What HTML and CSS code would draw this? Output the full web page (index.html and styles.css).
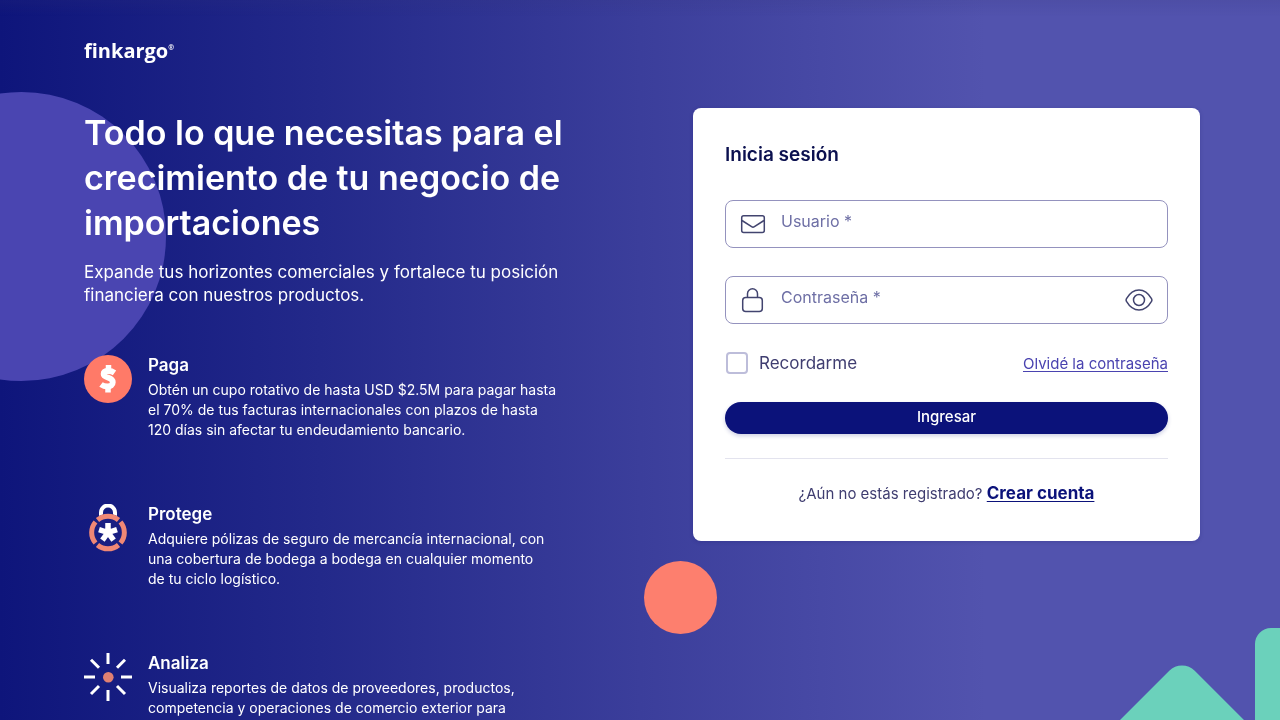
FILE: index.html
```html
<!DOCTYPE html>
<html lang="es">
<head>
<meta charset="utf-8">
<meta name="viewport" content="width=device-width, initial-scale=1">
<title>Finkargo</title>
<link rel="stylesheet" href="styles.css">
</head>
<body>
<div class="shapes" aria-hidden="true">
  <span class="shape shape-circle"></span>
  <span class="shape shape-dot"></span>
  <span class="shape shape-diamond"></span>
  <span class="shape shape-block"></span>
</div>
<div class="page">
  <header class="header">
    <a class="logo" href="#">finkargo<span class="logo-mark">®</span></a>
  </header>
  <main class="main">
    <section class="intro">
      <h1 class="title">Todo lo que necesitas para el<br>crecimiento de tu negocio de<br>importaciones</h1>
      <p class="lead">Expande tus horizontes comerciales y fortalece tu posición<br>financiera con nuestros productos.</p>
      <ul class="features">
        <li class="feature">
          <svg class="feature-icon" viewBox="0 0 48 48" aria-hidden="true">
            <circle cx="24" cy="24" r="24" fill="#ff7a68"/>
            <path d="M30.5 17.8C28.8 16.6 26.7 16 24.4 16c-3 0-4.8 1.1-4.800 3 0 4.500 9.200 2.600 9.200 8.200 0 2.900-2.200 4.300-5.300 4.300-2.400 0-4.700-.7-6.500-2" fill="none" stroke="#fff" stroke-width="5.800"/>
            <path d="M24.500 10v6M24 31.500v6" stroke="#fff" stroke-width="5.500"/>
          </svg>
          <div class="feature-body">
            <h2 class="feature-title">Paga</h2>
            <p class="feature-text">Obtén un cupo rotativo de hasta USD $2.5M para pagar hasta<br>el 70% de tus facturas internacionales con plazos de hasta<br>120 días sin afectar tu endeudamiento bancario.</p>
          </div>
        </li>
        <li class="feature">
          <svg class="feature-icon" viewBox="0 0 48 48" aria-hidden="true">
            <path d="M17 12V8.500a7 7 0 0 1 14 0V12" fill="none" stroke="#fff" stroke-width="4"/>
            <circle cx="24" cy="28.500" r="18.800" fill="#191f82"/>
            <g fill="none" stroke="#f08875" stroke-width="5">
              <path d="M13.500 16a16.300 16.300 0 0 1 21 0"/>
              <path d="M36.500 18a16.300 16.300 0 0 1 0 21"/>
              <path d="M34.500 41a16.300 16.300 0 0 1-21 0"/>
              <path d="M11.500 39a16.300 16.300 0 0 1 0-21"/>
            </g>
            <path d="M24 28.500V19M24 28.500l9-2.900M24 28.500l5.600 7.700M24 28.500l-5.600 7.700M24 28.500l-9-2.900" stroke="#fff" stroke-width="5.500"/>
          </svg>
          <div class="feature-body">
            <h2 class="feature-title">Protege</h2>
            <p class="feature-text">Adquiere pólizas de seguro de mercancía internacional, con<br>una cobertura de bodega a bodega en cualquier momento<br>de tu ciclo logístico.</p>
          </div>
        </li>
        <li class="feature">
          <svg class="feature-icon" viewBox="0 0 48 48" aria-hidden="true">
            <circle cx="24.300" cy="24.300" r="5.300" fill="#e08072"/>
            <path d="M24 0v11M24 37v11M0 24h11M37 24h11M7 6.700l8 8M33 33l8 8M41 6.700l-8 8M15 33l-8 8" stroke="#fff" stroke-width="3"/>
          </svg>
          <div class="feature-body">
            <h2 class="feature-title">Analiza</h2>
            <p class="feature-text">Visualiza reportes de datos de proveedores, productos,<br>competencia y operaciones de comercio exterior para</p>
          </div>
        </li>
      </ul>
    </section>
    <form class="card">
      <h2 class="card-title">Inicia sesión</h2>
      <div class="field">
        <svg class="field-icon" viewBox="0 0 28 28" aria-hidden="true">
          <rect x="2.700" y="5.700" width="22.600" height="16.800" rx="2"/>
          <path d="M3 10.500l9.600 6.200c.9.600 1.900.6 2.800 0l9.600-6.200"/>
        </svg>
        <input class="input" type="text" placeholder="Usuario *" aria-label="Usuario" required>
      </div>
      <div class="field">
        <svg class="field-icon" viewBox="0 0 28 28" aria-hidden="true">
          <rect x="3.700" y="11.500" width="19.600" height="14" rx="3"/>
          <path d="M8.500 11.500V7.800a5 5 0 0 1 10 0v3.700"/>
        </svg>
        <input class="input" type="password" placeholder="Contraseña *" aria-label="Contraseña" required>
        <button class="reveal" type="button" aria-label="Mostrar contraseña">
          <svg class="field-icon" viewBox="0 0 28 28" aria-hidden="true">
            <path d="M1.500 12.600C4.600 7.300 9 4 14 4s9.400 3.300 12.500 8.600c.5.900.5 1.900 0 2.800C23.400 20.700 19 24 14 24S4.600 20.700 1.500 15.400c-.5-.9-.5-1.900 0-2.800z"/>
            <circle cx="14" cy="14" r="5.500"/>
          </svg>
        </button>
      </div>
      <div class="options">
        <label class="remember"><input class="checkbox" type="checkbox">Recordarme</label>
        <a class="forgot" href="#">Olvidé la contraseña</a>
      </div>
      <button class="submit" type="submit">Ingresar</button>
      <p class="signup">¿Aún no estás registrado? <a class="signup-link" href="#">Crear cuenta</a></p>
    </form>
  </main>
</div>
</body>
</html>
```
FILE: styles.css
```css
* {
  box-sizing: border-box;
}

body {
  margin: 0;
  min-height: 100vh;
  font-family: Inter, "Liberation Sans", sans-serif;
  color: #fff;
  background: linear-gradient(90deg, #0e157b 0%, #23298a 25%, #3b3e9b 50%, #5253ae 77%) fixed;
}

h1, h2, p, ul {
  margin: 0;
  padding: 0;
}

.shapes {
  position: fixed;
  inset: 0;
  overflow: hidden;
  background: linear-gradient(rgba(50, 50, 120, 0.15), rgba(50, 50, 120, 0) 16px);
}

.shape {
  position: absolute;
}

.shape-circle {
  left: -123px;
  top: 92px;
  width: 289px;
  height: 289px;
  border-radius: 50%;
  background: #4a45b1;
}

.shape-dot {
  left: 644px;
  top: 561px;
  width: 73px;
  height: 73px;
  border-radius: 50%;
  background: #fd7f6e;
}

.shape-diamond {
  right: 28px;
  bottom: -107px;
  width: 140px;
  height: 140px;
  border-radius: 18px;
  transform: rotate(45deg);
  background: #6bd1bb;
}

.shape-block {
  right: -75px;
  bottom: -28px;
  width: 100px;
  height: 120px;
  border-radius: 16px;
  background: #6bd1bb;
}

.page {
  position: relative;
  padding: 36px 80px 0 84px;
}

.header {
  display: flex;
  height: 32px;
}

.logo {
  display: flex;
  color: #fff;
  font: 700 20px/30px "Open Sans", sans-serif;
  text-decoration: none;
}

.logo-mark {
  font-size: 7px;
  line-height: 24px;
}

.main {
  display: grid;
  grid-template-columns: 609fr 507fr;
  align-items: start;
  padding-top: 40px;
}

.title {
  font-size: 34px;
  font-weight: 600;
  line-height: 45px;
  padding-top: 2px;
  white-space: nowrap;
}

.lead {
  margin-top: 16px;
  font-size: 17px;
  line-height: 23px;
}

.features {
  display: grid;
  gap: 64px;
  margin-top: 48px;
  list-style: none;
}

.feature {
  display: flex;
  gap: 16px;
}

.feature-icon {
  flex: none;
  width: 48px;
  height: 48px;
}

.feature-title {
  margin-bottom: 4px;
  font-size: 17px;
  font-weight: 600;
  line-height: 21px;
}

.feature-text {
  font-size: 14px;
  line-height: 20px;
  white-space: nowrap;
}

.card {
  display: flex;
  flex-direction: column;
  padding: 32px;
  border-radius: 8px;
  color: #3f3d70;
  background: #fff;
  box-shadow: 0 1px 4px rgba(20, 20, 100, 0.2);
}

.card-title {
  margin-bottom: 30px;
  color: #0b104f;
  font-size: 19px;
  font-weight: 600;
  line-height: 30px;
}

.field {
  display: flex;
  align-items: center;
  gap: 14px;
  height: 48px;
  margin-bottom: 28px;
  padding: 0 14px 0 13px;
  border: 1px solid #9492be;
  border-radius: 8px;
}

.field-icon {
  display: block;
  flex: none;
  width: 28px;
  height: 28px;
  fill: none;
  stroke: #42446f;
  stroke-width: 1.5;
}

.input {
  flex: 1;
  min-width: 0;
  height: 44px;
  padding: 0 0 6px;
  border: 0;
  outline: 0;
  background: none;
  color: #3f3d70;
  font: 16px/24px Inter, "Liberation Sans", sans-serif;
}

.input::placeholder {
  color: #6e6fa5;
  opacity: 1;
}

.reveal {
  padding: 0;
  border: 0;
  background: none;
}

.options {
  display: flex;
  align-items: center;
  justify-content: space-between;
  height: 22px;
}

.remember {
  display: flex;
  align-items: center;
  gap: 11px;
  font-size: 17px;
}

.checkbox {
  appearance: none;
  width: 22px;
  height: 22px;
  margin: 0 0 0 1px;
  border: 2px solid #bdbdda;
  border-radius: 4px;
}

.forgot {
  color: #4a43b0;
  font-size: 15px;
  text-underline-offset: 2px;
}

.submit {
  height: 32px;
  margin: 28px 0 24px;
  padding: 0 0 2px;
  border: 0;
  border-radius: 16px;
  color: #fff;
  background: #0b127a;
  box-shadow: 0 2px 4px rgba(11, 18, 122, 0.2);
  font: 500 15px/20px Inter, "Liberation Sans", sans-serif;
}

.signup {
  padding: 23px 0 4px;
  border-top: 1px solid #e3e3ee;
  font-size: 15px;
  line-height: 23px;
  text-align: center;
}

.signup-link {
  color: #0b127a;
  font-size: 17px;
  font-weight: 700;
  text-underline-offset: 2px;
}
```
